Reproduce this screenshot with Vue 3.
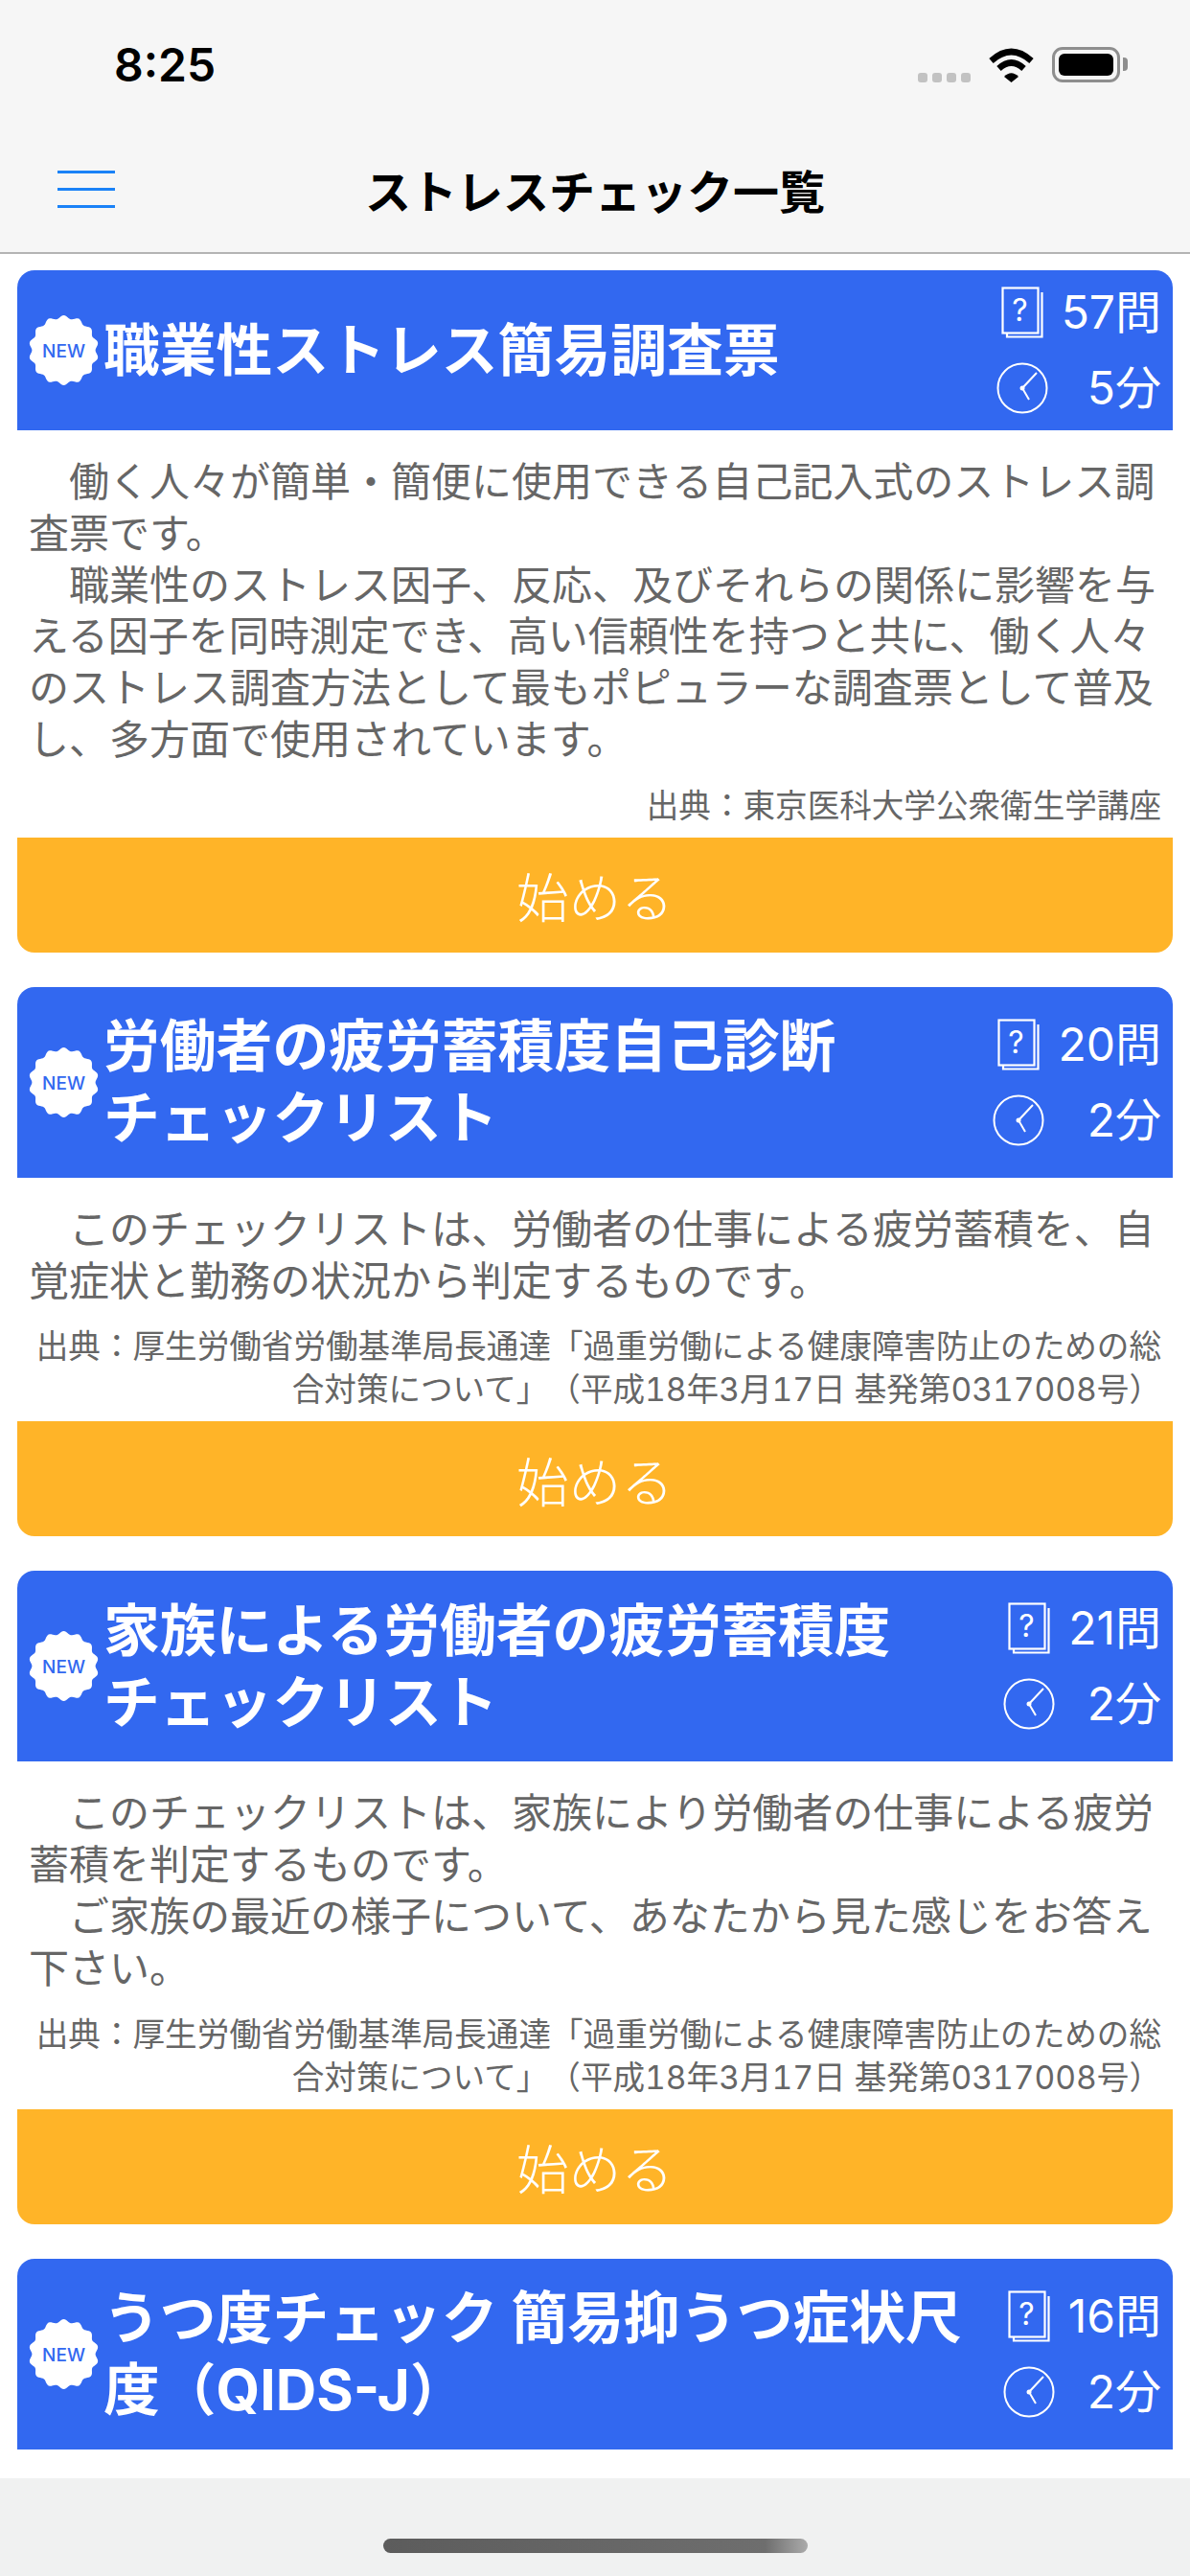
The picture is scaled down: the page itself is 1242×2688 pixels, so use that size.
<template>
  <div class="page">
    <header class="top">
      <div class="status">
        <span class="time">8:25</span>
        <div class="status-icons">
          <div class="dots"><i></i><i></i><i></i><i></i></div>
          <svg class="wifi" width="47" height="36" viewBox="0 0 47 36">
            <path d="M2.5 13.5Q23.5 -5.5 44.5 13.5" fill="none" stroke="#000" stroke-width="6.5" />
            <path d="M10.5 21.5Q23.5 9.5 36.5 21.5" fill="none" stroke="#000" stroke-width="6.5" />
            <path d="M16 30Q23.5 22.5 31 30L23.5 36Z" fill="#000" />
          </svg>
          <div class="battery"><div class="battery-fill"></div></div>
        </div>
      </div>
      <nav class="nav">
        <div class="menu"><span></span><span></span><span></span></div>
        <h1>ストレスチェック一覧</h1>
        <div></div>
      </nav>
    </header>

    <main class="list">
      <section v-for="item in items" :key="item.title" class="card">
        <div class="card-head">
          <svg class="badge" width="73" height="73" viewBox="0 0 73 73">
            <path :d="badgePath" fill="#fff" />
            <text x="36.5" y="43.5" text-anchor="middle" class="badge-text">NEW</text>
          </svg>
          <h2>{{ item.title }}</h2>
          <div class="meta">
            <svg width="44" height="54" viewBox="0 0 44 54" fill="none" stroke="#fff" stroke-width="2.2">
              <rect x="1.5" y="1.5" width="37" height="47" />
              <path d="M42.5 6V52.5H6V49" />
              <text x="19.5" y="36" text-anchor="middle" class="q-mark">?</text>
            </svg>
            <span>{{ item.count }}問</span>
            <svg width="54" height="54" viewBox="0 0 54 54" fill="none" stroke="#fff" stroke-width="2">
              <circle cx="27" cy="27" r="25.5" />
              <path d="M42 11L27 27L34 39" />
              <circle cx="27" cy="27" r="2.5" fill="#fff" stroke="none" />
            </svg>
            <span>{{ item.minutes }}分</span>
          </div>
        </div>
        <template v-if="item.body">
          <p class="body">{{ item.body }}</p>
          <p class="source">{{ item.source }}</p>
          <button class="start">始める</button>
        </template>
      </section>
    </main>

    <footer class="bottom"><div class="home"></div></footer>
  </div>
</template>

<script setup>
const healthSource = '出典：厚生労働省労働基準局長通達「過重労働による健康障害防止のための総合対策について」（平成18年3月17日 基発第0317008号）'

const items = [
  {
    title: '職業性ストレス簡易調査票',
    count: 57,
    minutes: 5,
    body: '　働く人々が簡単・簡便に使用できる自己記入式のストレス調査票です。\n　職業性のストレス因子、反応、及びそれらの関係に影響を与える因子を同時測定でき、高い信頼性を持つと共に、働く人々のストレス調査方法として最もポピュラーな調査票として普及し、多方面で使用されています。',
    source: '出典：東京医科大学公衆衛生学講座'
  },
  {
    title: '労働者の疲労蓄積度自己診断\nチェックリスト',
    count: 20,
    minutes: 2,
    body: '　このチェックリストは、労働者の仕事による疲労蓄積を、自覚症状と勤務の状況から判定するものです。',
    source: healthSource
  },
  {
    title: '家族による労働者の疲労蓄積度\nチェックリスト',
    count: 21,
    minutes: 2,
    body: '　このチェックリストは、家族により労働者の仕事による疲労蓄積を判定するものです。\n　ご家族の最近の様子について、あなたから見た感じをお答え下さい。',
    source: healthSource
  },
  {
    title: 'うつ度チェック 簡易抑うつ症状尺度（QIDS-J）',
    count: 16,
    minutes: 2
  }
]

// scalloped seal behind the NEW label
const badgePath = (() => {
  const pts = []
  for (let i = 0; i < 168; i++) {
    const a = (i / 168) * Math.PI * 2 - Math.PI / 2
    const r = 34.8 + 1.7 * Math.cos(a * 14 + Math.PI * 7)
    pts.push(`${(36.5 + r * Math.cos(a)).toFixed(2)} ${(36.5 + r * Math.sin(a)).toFixed(2)}`)
  }
  return `M${pts.join('L')}Z`
})()
</script>

<style>
html, body {
  margin: 0;
  background: #fff;
}
</style>

<style scoped>
.page {
  width: 1242px;
  height: 2688px;
  display: flex;
  flex-direction: column;
  overflow: hidden;
  font-family: "Noto Sans CJK JP", "Noto Sans", sans-serif;
  text-spacing-trim: space-all;
}

.top {
  background: #f6f6f6;
  border-bottom: 2px solid #b4b4b4;
}

.status {
  height: 132px;
  box-sizing: border-box;
  padding: 49px 73px 0 119px;
  display: flex;
  justify-content: space-between;
  align-items: flex-start;
}

.time {
  font-family: Inter, "Liberation Sans", sans-serif;
  font-size: 48px;
  font-weight: 600;
  line-height: 37px;
  color: #000;
}

.status-icons {
  display: flex;
  align-items: flex-end;
  gap: 19px;
}

.dots {
  display: flex;
  gap: 5px;
}

.dots i {
  width: 10px;
  height: 10px;
  border-radius: 3px;
  background: #c2c2c2;
}

.wifi {
  display: block;
}

.battery {
  position: relative;
  width: 71px;
  height: 37px;
  box-sizing: border-box;
  padding: 4px;
  border: 3px solid #8e8e8e;
  border-radius: 11px;
}

.battery::after {
  content: "";
  position: absolute;
  top: 8px;
  right: -11px;
  width: 5px;
  height: 14px;
  background: #8e8e8e;
  border-radius: 0 4px 4px 0;
}

.battery-fill {
  height: 100%;
  background: #000;
  border-radius: 6px;
}

.nav {
  height: 131px;
  padding: 0 60px;
  display: grid;
  grid-template-columns: 1fr auto 1fr;
  align-items: center;
}

.nav h1 {
  margin: 0 0 2px;
  font-size: 48px;
  font-weight: 700;
  color: #000;
}

.menu {
  width: 60px;
  display: flex;
  flex-direction: column;
  gap: 15px;
}

.menu span {
  height: 3px;
  background: #1a82f7;
}

.list {
  flex: 1;
  min-height: 0;
  overflow: hidden;
  padding: 17px 18px 0;
  display: flex;
  flex-direction: column;
  gap: 36px;
  background: #fff;
}

.card {
  flex: none;
}

.card-head {
  min-height: 167px;
  padding: 0 12px 0 12px;
  display: flex;
  align-items: center;
  background: #3268f0;
  border-radius: 18px 18px 0 0;
  color: #fff;
}

.badge {
  flex: none;
  display: block;
}

.badge-text {
  font-family: Inter, "Liberation Sans", sans-serif;
  font-size: 19px;
  font-weight: 500;
  fill: #3268f0;
}

.card-head h2 {
  flex: 1;
  min-width: 0;
  margin: 0 0 0 5px;
  padding: 24.5px 0;
  font-family: Inter, "Noto Sans CJK JP", sans-serif;
  font-size: 58.8px;
  line-height: 75px;
  font-weight: 700;
  white-space: pre-line;
}

.meta {
  flex: none;
  display: grid;
  grid-template-columns: auto auto;
  justify-items: end;
  align-items: center;
  column-gap: 14px;
  row-gap: 25px;
  font-family: Inter, "Noto Sans CJK JP", sans-serif;
  font-size: 48px;
  line-height: 54px;
}

.meta svg {
  justify-self: center;
  display: block;
}

.q-mark {
  font-family: Inter, "Liberation Sans", sans-serif;
  font-size: 32px;
  font-weight: 400;
  fill: #fff;
  stroke: none;
}

.body {
  margin: 0;
  padding: 24px 12px 0;
  font-size: 42px;
  line-height: 53.8px;
  color: #666;
  white-space: pre-line;
}

.source {
  margin: 0;
  padding: 22px 12px 11px;
  font-family: Inter, "Noto Sans CJK JP", sans-serif;
  font-variant-numeric: tabular-nums;
  font-size: 33.6px;
  line-height: 45px;
  text-align: right;
  color: #666;
}

.start {
  display: block;
  width: 100%;
  height: 120px;
  padding: 0;
  border: none;
  border-radius: 0 0 18px 18px;
  background: #ffb428;
  color: #fff;
  font-family: inherit;
  font-size: 54.6px;
  font-weight: 300;
}

.bottom {
  height: 102px;
  flex: none;
  background: #f0f1f1;
  display: flex;
  justify-content: center;
  padding-top: 63px;
  box-sizing: border-box;
}

.home {
  width: 443px;
  height: 15px;
  border-radius: 8px;
  background: linear-gradient(90deg, #5c5c5c, #6e6e6e 90%, #ababab);
}
</style>
